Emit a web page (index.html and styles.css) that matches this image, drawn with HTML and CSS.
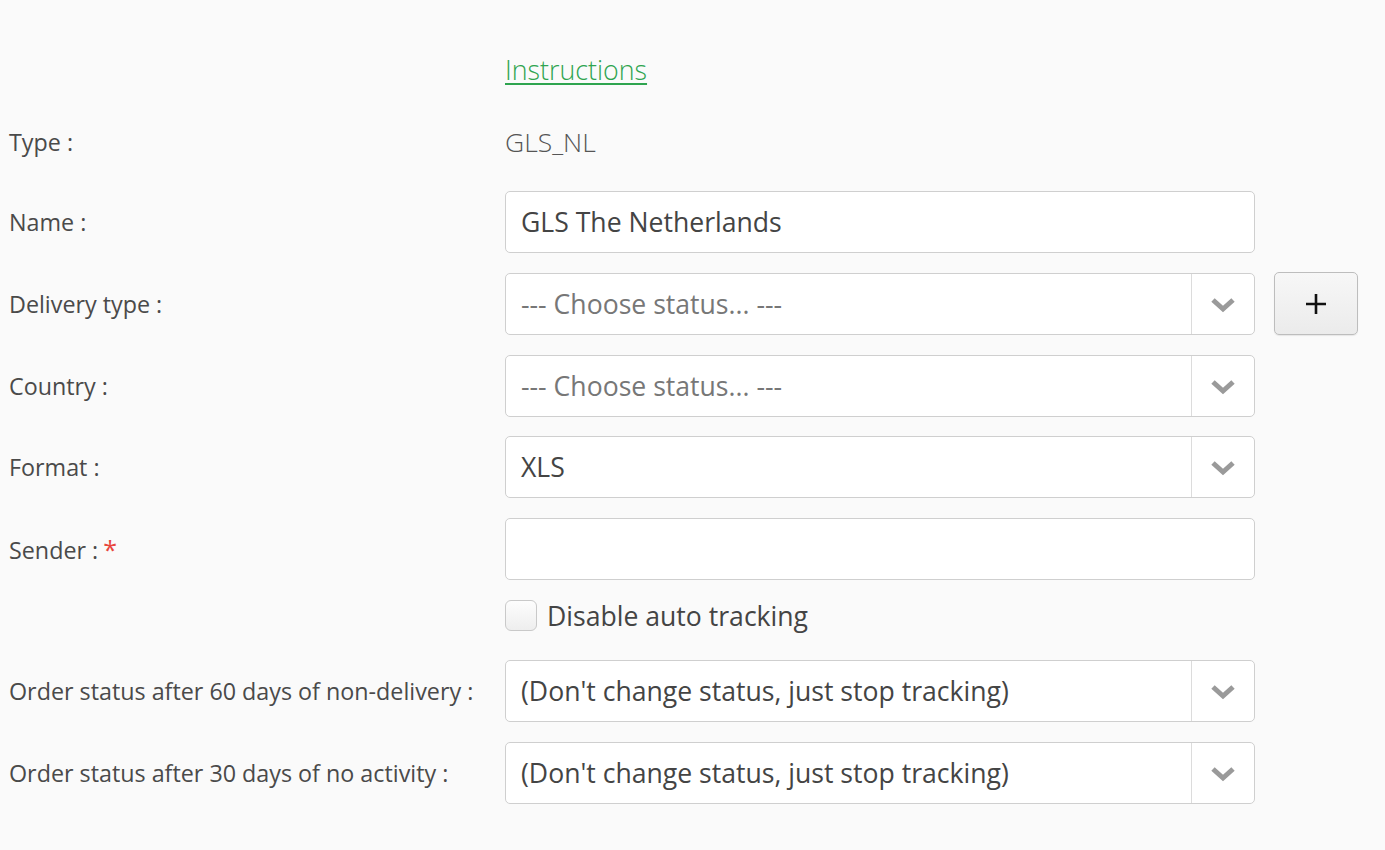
FILE: index.html
```html
<!DOCTYPE html>
<html>
<head>
<meta charset="utf-8">
<link rel="stylesheet" href="styles.css">
</head>
<body>
<form class="form">
  <div class="row row-instr">
    <div class="label"></div>
    <div class="control"><a class="link" href="#">Instructions</a></div>
  </div>
  <div class="row row-type">
    <div class="label">Type :</div>
    <div class="control static">GLS_NL</div>
  </div>
  <div class="row row-name">
    <div class="label">Name :</div>
    <div class="control"><div class="input">GLS The Netherlands</div></div>
  </div>
  <div class="row">
    <div class="label">Delivery type :</div>
    <div class="control"><div class="select"><span class="placeholder">--- Choose status... ---</span><span class="arrow"><svg width="26" height="16" viewBox="0 0 26 16"><polyline points="3,3 13,12 23,3" fill="none" stroke="#9a9a9a" stroke-width="5"/></svg></span></div></div>
    <button type="button" class="plus"><svg width="24" height="24" viewBox="0 0 24 24"><path d="M12 2v20M2 12h20" stroke="#111" stroke-width="2.6"/></svg></button>
  </div>
  <div class="row">
    <div class="label">Country :</div>
    <div class="control"><div class="select"><span class="placeholder">--- Choose status... ---</span><span class="arrow"><svg width="26" height="16" viewBox="0 0 26 16"><polyline points="3,3 13,12 23,3" fill="none" stroke="#9a9a9a" stroke-width="5"/></svg></span></div></div>
  </div>
  <div class="row row-format">
    <div class="label">Format :</div>
    <div class="control"><div class="select"><span class="value">XLS</span><span class="arrow"><svg width="26" height="16" viewBox="0 0 26 16"><polyline points="3,3 13,12 23,3" fill="none" stroke="#9a9a9a" stroke-width="5"/></svg></span></div></div>
  </div>
  <div class="row">
    <div class="label">Sender :<span class="req">*</span></div>
    <div class="control"><div class="input"></div></div>
  </div>
  <div class="row row-check">
    <div class="label"></div>
    <div class="control check"><span class="box"></span><span class="check-text">Disable auto tracking</span></div>
  </div>
  <div class="row">
    <div class="label">Order status after 60 days of non-delivery :</div>
    <div class="control"><div class="select"><span class="value">(Don't change status, just stop tracking)</span><span class="arrow"><svg width="26" height="16" viewBox="0 0 26 16"><polyline points="3,3 13,12 23,3" fill="none" stroke="#9a9a9a" stroke-width="5"/></svg></span></div></div>
  </div>
  <div class="row">
    <div class="label">Order status after 30 days of no activity :</div>
    <div class="control"><div class="select"><span class="value">(Don't change status, just stop tracking)</span><span class="arrow"><svg width="26" height="16" viewBox="0 0 26 16"><polyline points="3,3 13,12 23,3" fill="none" stroke="#9a9a9a" stroke-width="5"/></svg></span></div></div>
  </div>
</form>
</body>
</html>
```
FILE: styles.css
```css
html, body {
  margin: 0;
  padding: 0;
  background: #fafafa;
  font-family: "Open Sans", "Liberation Sans", sans-serif;
  color: #444;
}
.form {
  display: flex;
  flex-direction: column;
  gap: 20px;
  padding: 38px 0 0 9px;
}
.row {
  display: flex;
  align-items: center;
  height: 62px;
}
.row-type { height: 42px; margin-top: 1px; }
.row-name { margin-top: 8px; }
.row-format { margin-top: -1px; }
.row-check { height: 40px; align-items: flex-start; }
.label {
  width: 496px;
  flex: none;
  font-size: 23.3px;
  color: #4a4a4a;
}
.req { color: #e8453c; font-size: 25px; margin-left: 5px; }
.control {
  width: 750px;
  flex: none;
}
.link {
  color: #2ea44f;
  font-size: 26.8px;
  font-weight: 300;
  text-decoration: underline;
  text-decoration-thickness: 2px;
  text-underline-offset: 3px;
}
.static {
  font-size: 26.5px;
  font-weight: 300;
  color: #555;
}
.input, .select {
  box-sizing: border-box;
  height: 62px;
  border: 1px solid #cfcfcf;
  border-radius: 5px;
  background: #fff;
  font-size: 26.6px;
  color: #444;
  display: flex;
  align-items: center;
  padding-left: 15px;
}
.select { padding-right: 0; }
.placeholder, .value { flex: 1; white-space: nowrap; }
.placeholder { color: #777; }
.arrow {
  width: 63px;
  height: 60px;
  border-left: 1px solid #dcdcdc;
  display: flex;
  align-items: center;
  justify-content: center;
  padding-top: 2px;
  box-sizing: border-box;
}
.plus {
  margin-left: 19px;
  width: 84px;
  height: 63px;
  border: 1px solid #bdbdbd;
  border-radius: 5px;
  background: linear-gradient(#f7f7f7, #ebebeb);
  box-shadow: 0 1px 1px rgba(0,0,0,0.08);
  display: flex;
  align-items: center;
  justify-content: center;
  padding: 0;
  margin-top: -1px;
}
.check {
  display: flex;
  align-items: center;
  gap: 10px;
  height: 31px;
}
.box {
  box-sizing: border-box;
  width: 32px;
  height: 31px;
  border: 1px solid #c9c9c9;
  border-radius: 6px;
  background: linear-gradient(#fdfdfd, #eeeeee);
}
.check-text { font-size: 26.6px; color: #444; }
```
